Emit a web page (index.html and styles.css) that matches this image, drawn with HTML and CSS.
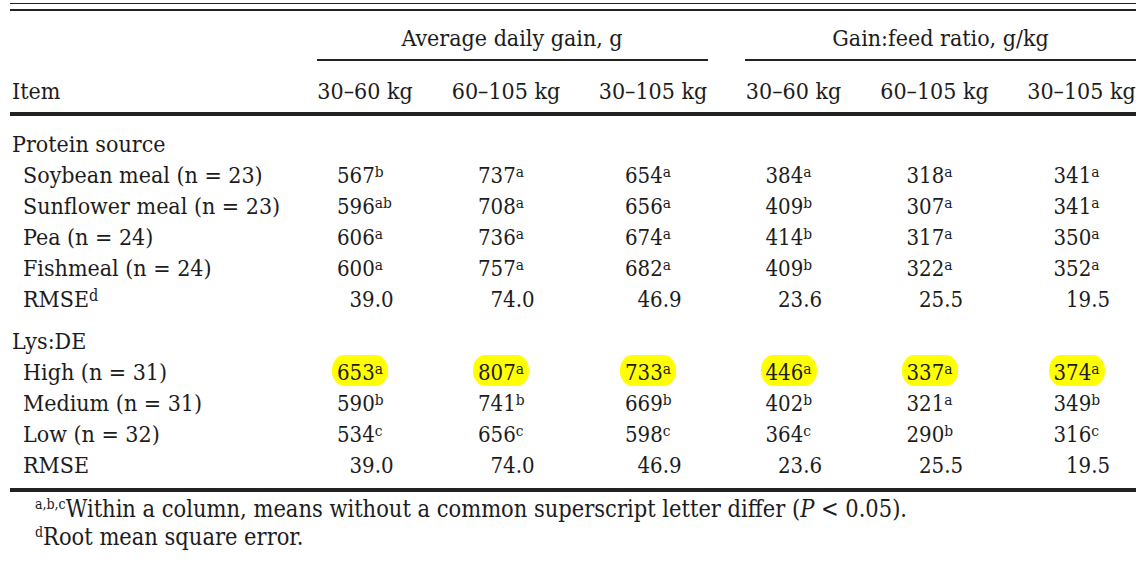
FILE: index.html
```html
<!DOCTYPE html>
<html>
<head>
<meta charset="utf-8">
<link rel="stylesheet" href="styles.css">
</head>
<body>
<div class="wrap">
  <div class="top-rule"></div>
  <div class="row group-row">
    <div></div>
    <div class="group g1">Average daily gain, g</div>
    <div class="group g2">Gain:feed ratio, g/kg</div>
  </div>
  <div class="row head-row">
    <div class="item">Item</div>
    <div class="h">30–60 kg</div>
    <div class="h">60–105 kg</div>
    <div class="h">30–105 kg</div>
    <div class="h">30–60 kg</div>
    <div class="h">60–105 kg</div>
    <div class="h">30–105 kg</div>
  </div>
  <div class="body">
    <div class="section">
      <div class="row"><div class="item">Protein source</div></div>
      <div class="row">
        <div class="item sub">Soybean meal (n = 23)</div>
        <div class="c"><span class="v">567<sup>b</sup></span></div>
        <div class="c"><span class="v">737<sup>a</sup></span></div>
        <div class="c"><span class="v">654<sup>a</sup></span></div>
        <div class="c"><span class="v">384<sup>a</sup></span></div>
        <div class="c"><span class="v">318<sup>a</sup></span></div>
        <div class="c"><span class="v">341<sup>a</sup></span></div>
      </div>
      <div class="row">
        <div class="item sub">Sunflower meal (n = 23)</div>
        <div class="c"><span class="v">596<sup>ab</sup></span></div>
        <div class="c"><span class="v">708<sup>a</sup></span></div>
        <div class="c"><span class="v">656<sup>a</sup></span></div>
        <div class="c"><span class="v">409<sup>b</sup></span></div>
        <div class="c"><span class="v">307<sup>a</sup></span></div>
        <div class="c"><span class="v">341<sup>a</sup></span></div>
      </div>
      <div class="row">
        <div class="item sub">Pea (n = 24)</div>
        <div class="c"><span class="v">606<sup>a</sup></span></div>
        <div class="c"><span class="v">736<sup>a</sup></span></div>
        <div class="c"><span class="v">674<sup>a</sup></span></div>
        <div class="c"><span class="v">414<sup>b</sup></span></div>
        <div class="c"><span class="v">317<sup>a</sup></span></div>
        <div class="c"><span class="v">350<sup>a</sup></span></div>
      </div>
      <div class="row">
        <div class="item sub">Fishmeal (n = 24)</div>
        <div class="c"><span class="v">600<sup>a</sup></span></div>
        <div class="c"><span class="v">757<sup>a</sup></span></div>
        <div class="c"><span class="v">682<sup>a</sup></span></div>
        <div class="c"><span class="v">409<sup>b</sup></span></div>
        <div class="c"><span class="v">322<sup>a</sup></span></div>
        <div class="c"><span class="v">352<sup>a</sup></span></div>
      </div>
      <div class="row">
        <div class="item sub">RMSE<sup>d</sup></div>
        <div class="c"><span class="v dec">39.0</span></div>
        <div class="c"><span class="v dec">74.0</span></div>
        <div class="c"><span class="v dec">46.9</span></div>
        <div class="c"><span class="v dec">23.6</span></div>
        <div class="c"><span class="v dec">25.5</span></div>
        <div class="c"><span class="v dec">19.5</span></div>
      </div>
    </div>
    <div class="section second">
      <div class="row"><div class="item">Lys:DE</div></div>
      <div class="row">
        <div class="item sub">High (n = 31)</div>
        <div class="c"><span class="v"><span class="hl">653<sup>a</sup></span></span></div>
        <div class="c"><span class="v"><span class="hl">807<sup>a</sup></span></span></div>
        <div class="c"><span class="v"><span class="hl">733<sup>a</sup></span></span></div>
        <div class="c"><span class="v"><span class="hl">446<sup>a</sup></span></span></div>
        <div class="c"><span class="v"><span class="hl">337<sup>a</sup></span></span></div>
        <div class="c"><span class="v"><span class="hl">374<sup>a</sup></span></span></div>
      </div>
      <div class="row">
        <div class="item sub">Medium (n = 31)</div>
        <div class="c"><span class="v">590<sup>b</sup></span></div>
        <div class="c"><span class="v">741<sup>b</sup></span></div>
        <div class="c"><span class="v">669<sup>b</sup></span></div>
        <div class="c"><span class="v">402<sup>b</sup></span></div>
        <div class="c"><span class="v">321<sup>a</sup></span></div>
        <div class="c"><span class="v">349<sup>b</sup></span></div>
      </div>
      <div class="row">
        <div class="item sub">Low (n = 32)</div>
        <div class="c"><span class="v">534<sup>c</sup></span></div>
        <div class="c"><span class="v">656<sup>c</sup></span></div>
        <div class="c"><span class="v">598<sup>c</sup></span></div>
        <div class="c"><span class="v">364<sup>c</sup></span></div>
        <div class="c"><span class="v">290<sup>b</sup></span></div>
        <div class="c"><span class="v">316<sup>c</sup></span></div>
      </div>
      <div class="row">
        <div class="item sub">RMSE</div>
        <div class="c"><span class="v dec">39.0</span></div>
        <div class="c"><span class="v dec">74.0</span></div>
        <div class="c"><span class="v dec">46.9</span></div>
        <div class="c"><span class="v dec">23.6</span></div>
        <div class="c"><span class="v dec">25.5</span></div>
        <div class="c"><span class="v dec">19.5</span></div>
      </div>
    </div>
  </div>
  <div class="notes">
    <p><sup>a,b,c</sup>Within a column, means without a common superscript letter differ (<i>P</i> &lt; 0.05).</p>
    <p><sup>d</sup>Root mean square error.</p>
  </div>
</div>
</body>
</html>
```

FILE: styles.css
```css
html, body {
  margin: 0;
  padding: 0;
  background: #ffffff;
}

body {
  font-family: "DejaVu Serif Condensed", "DejaVu Serif", serif;
  font-stretch: condensed;
  font-size: 23px;
  color: #1c1c1c;
}

.wrap {
  width: 1126px;
  margin-left: 10px;
}

.top-rule {
  margin-top: 3px;
  height: 4.5px;
  border-top: 1.5px solid #222222;
  border-bottom: 2px solid #222222;
}

.row {
  display: grid;
  grid-template-columns: 269px 97px 110px 109px 97px 110px 109px;
  column-gap: 37.5px;
  height: 31px;
  line-height: 31px;
  white-space: nowrap;
}

.group-row {
  margin-top: 12.5px;
  height: auto;
}

.group {
  text-align: center;
  padding-bottom: 5px;
  border-bottom: 2px solid #222222;
}

.g1 { grid-column: 2 / span 3; }
.g2 { grid-column: 5 / span 3; }

.head-row {
  margin-top: 15px;
  height: auto;
  padding-bottom: 5px;
  border-bottom: 4px solid #222222;
}

.item {
  padding-left: 2px;
}

.item.sub {
  padding-left: 13px;
}

.h {
  text-align: center;
}

.body {
  padding-top: 13px;
  padding-bottom: 6.5px;
  border-bottom: 4px solid #222222;
}

.section.second {
  margin-top: 11px;
}

.c {
  display: flex;
  justify-content: center;
  font-size: 22px;
}

.v {
  display: block;
  width: 56px;
  text-align: left;
}

.v.dec {
  padding-left: 12.5px;
  width: 43.5px;
}

sup {
  font-size: 0.7em;
  vertical-align: 0.4em;
  line-height: 0;
}

.hl {
  background: #ffff00;
  border-radius: 12px / 15px;
  padding: 5px 5px 1px 5px;
  margin-left: -5px;
}

.notes {
  margin-top: 3px;
  font-size: 23.4px;
  line-height: 28.3px;
}

.notes p {
  margin: 0;
  padding-left: 25px;
}

.notes sup {
  font-size: 0.6em;
  vertical-align: 0.55em;
}
```
